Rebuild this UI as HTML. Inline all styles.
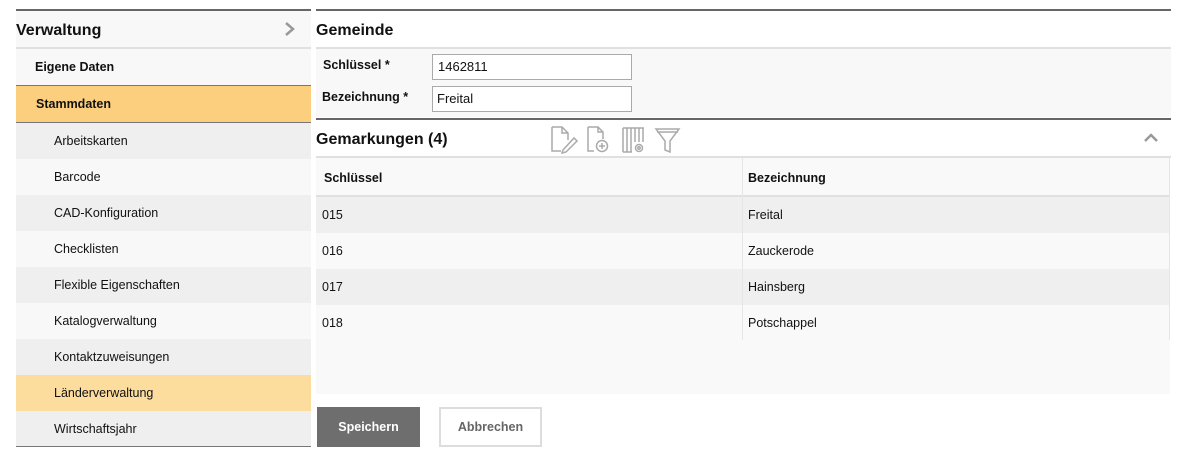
<!DOCTYPE html>
<html><head><meta charset="utf-8"><style>
*{margin:0;padding:0;box-sizing:border-box}
body{width:1183px;height:449px;background:#fff;font-family:"Liberation Sans",Arial,sans-serif;color:#111;position:relative;overflow:hidden}
.a{position:absolute}
.nav div.r{position:absolute;left:16px;width:295px;height:36px;line-height:36px;font-size:12.5px}
</style></head><body>
<div class="a" style="left:16px;top:9px;width:295px;height:2px;background:#666"></div>
<div class="a" style="left:16px;top:11px;width:295px;height:36px;background:#f8f8f8;font-weight:bold;font-size:16px;line-height:40px">Verwaltung</div>
<svg class="a" style="left:284px;top:21px" width="12" height="16"><path d="M2 2 L9 8 L2 14" stroke="#999" stroke-width="2.5" fill="none"/></svg>
<div class="a" style="left:16px;top:47px;width:295px;height:2px;background:#e0e0e0"></div>
<div class="nav">
<div class="r" style="top:49px;background:#f8f8f8;font-weight:bold;padding-left:19px">Eigene Daten</div>
<div class="a" style="left:16px;top:85px;width:295px;height:1px;background:#777"></div>
<div class="r" style="top:86px;background:#fbcf7d;font-weight:bold;padding-left:20px">Stammdaten</div>
<div class="a" style="left:16px;top:122px;width:295px;height:1px;background:#777"></div>
<div class="r" style="top:123px;background:#efefef;padding-left:38px">Arbeitskarten</div>
<div class="r" style="top:159px;background:#f8f8f8;padding-left:38px">Barcode</div>
<div class="r" style="top:195px;background:#efefef;padding-left:38px">CAD-Konfiguration</div>
<div class="r" style="top:231px;background:#f8f8f8;padding-left:38px">Checklisten</div>
<div class="r" style="top:267px;background:#efefef;padding-left:38px">Flexible Eigenschaften</div>
<div class="r" style="top:303px;background:#f8f8f8;padding-left:38px">Katalogverwaltung</div>
<div class="r" style="top:339px;background:#efefef;padding-left:38px">Kontaktzuweisungen</div>
<div class="r" style="top:375px;background:#fddd9d;padding-left:38px">Länderverwaltung</div>
<div class="r" style="top:411px;background:#efefef;padding-left:38px">Wirtschaftsjahr</div>
</div>
<div class="a" style="left:16px;top:446px;width:295px;height:1px;background:#777"></div>
<div class="a" style="left:316px;top:9px;width:855px;height:2px;background:#666"></div>
<div class="a" style="left:316px;top:11px;width:855px;height:36px;font-weight:bold;font-size:16px;line-height:40px">Gemeinde</div>
<div class="a" style="left:316px;top:47px;width:855px;height:2px;background:#e0e0e0"></div>
<div class="a" style="left:316px;top:49px;width:855px;height:68px;background:#f8f8f8"></div>
<div class="a" style="left:323px;top:58px;font-size:12.5px;font-weight:bold">Schlüssel *</div>
<div class="a" style="left:322px;top:90px;font-size:12.5px;font-weight:bold">Bezeichnung *</div>
<div class="a" style="left:432px;top:54px;width:200px;height:26px;border:1px solid #aaa;background:#fff;font-size:13px;line-height:24px;padding-left:5px">1462811</div>
<div class="a" style="left:432px;top:86px;width:200px;height:26px;border:1px solid #aaa;background:#fff;font-size:13px;line-height:24px;padding-left:4px">Freital</div>
<div class="a" style="left:316px;top:118px;width:855px;height:2px;background:#666"></div>
<div class="a" style="left:316px;top:120px;font-weight:bold;font-size:16px;line-height:40px">Gemarkungen (4)</div>
<svg class="a" style="left:548px;top:124px" width="136" height="30" fill="none" stroke="#aaa" stroke-width="1.5">
<path d="M4 3 H14 L20 9 V16 M20 9 H14 V3 M4 3 V27 H13"/><path d="M15 26 L26 14 L29 17 L18 28 L14 29 Z"/>
<path d="M40 3 H50 L55 8 V15 M55 8 H50 V3 M40 3 V27 H46"/><circle cx="54" cy="22" r="5.5"/><path d="M54 19 V25 M51 22 H57"/>
<path d="M75 4 V28 M79 4 V28 M83 4 V28 M87 4 V18 M91 4 V18 M95 4 V18 M75 4 H96 M75 28 H84"/><circle cx="91" cy="24" r="3.5"/><circle cx="91" cy="24" r="1.2"/>
<path d="M108 5 H131 L122 17 V28 L117 26 V17 Z M109 8 H130"/>
</svg>
<svg class="a" style="left:1143px;top:132px" width="16" height="12"><path d="M2 9 L8 3 L14 9" stroke="#999" stroke-width="2.5" fill="none"/></svg>
<div class="a" style="left:316px;top:156px;width:855px;height:2px;background:#e0e0e0"></div>
<div class="a" style="left:316px;top:158px;width:854px;height:236px;background:#f9f9f9"></div>
<div class="a" style="left:324px;top:171px;font-size:12.5px;font-weight:bold">Schlüssel</div>
<div class="a" style="left:748px;top:171px;font-size:12.5px;font-weight:bold">Bezeichnung</div>
<div class="a" style="left:316px;top:195px;width:854px;height:2px;background:#e0e0e0"></div>
<div class="a" style="left:316px;top:197px;width:854px;height:36px;background:#efefef"></div>
<div class="a" style="left:316px;top:269px;width:854px;height:36px;background:#efefef"></div>
<div class="a" style="left:742px;top:158px;width:1px;height:182px;background:#e6e6e6"></div>
<div class="a" style="left:1169px;top:158px;width:1px;height:182px;background:#e6e6e6"></div>
<div class="a" style="left:322px;top:208px;font-size:12.5px">015</div><div class="a" style="left:748px;top:208px;font-size:12.5px">Freital</div>
<div class="a" style="left:322px;top:244px;font-size:12.5px">016</div><div class="a" style="left:748px;top:244px;font-size:12.5px">Zauckerode</div>
<div class="a" style="left:322px;top:280px;font-size:12.5px">017</div><div class="a" style="left:748px;top:280px;font-size:12.5px">Hainsberg</div>
<div class="a" style="left:322px;top:316px;font-size:12.5px">018</div><div class="a" style="left:748px;top:316px;font-size:12.5px">Potschappel</div>
<div class="a" style="left:317px;top:407px;width:103px;height:40px;background:#6e6e6e;color:#fff;font-weight:bold;font-size:12.5px;text-align:center;line-height:40px">Speichern</div>
<div class="a" style="left:439px;top:407px;width:103px;height:40px;border:2px solid #ddd;color:#666;font-weight:bold;font-size:12.5px;text-align:center;line-height:36px">Abbrechen</div>
</body></html>
